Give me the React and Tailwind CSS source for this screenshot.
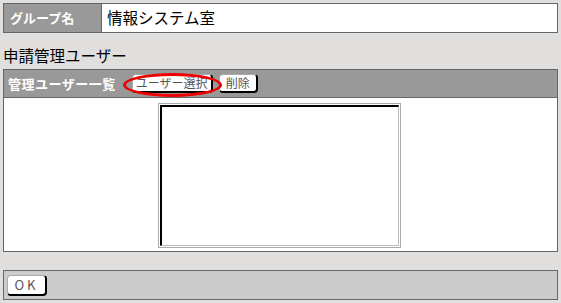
import React from 'react';

const jp = { fontFamily: '"Noto Sans CJK JP", "Liberation Sans", sans-serif' };

const Btn = ({ children, className = '' }) => (
  <button
    className={`flex items-center justify-center bg-white rounded-[4px] border border-t-[#aaa] border-l-[#aaa] border-r-black border-b-black border-r-2 border-b-2 text-[12px] leading-none text-[#555] ${className}`}
  >
    {children}
  </button>
);

export default function App() {
  return (
    <div style={jp} className="w-[561px] h-[303px] bg-[#e1dfde] pt-[3px] pl-[3px] pr-[3px] overflow-hidden">
      {/* グループ名 */}
      <div className="flex h-[30px] border border-[#666] bg-white">
        <div className="w-[98px] bg-[#999] border-r border-[#666] flex items-center pl-[6px] text-[13px] font-bold text-white">
          グループ名
        </div>
        <div className="flex-1 flex items-center pl-[5px] text-[15.5px] text-black">情報システム室</div>
      </div>

      {/* heading */}
      <div className="h-[36px] pt-[12px] text-[15.5px] leading-[20px] text-black">申請管理ユーザー</div>

      {/* panel */}
      <div className="border border-[#666]">
        <div className="relative h-[28px] bg-[#999] border-b border-[#666] flex items-center pl-[4px]">
          <span className="text-[13px] font-bold text-white tracking-[0.5px]">管理ユーザー一覧</span>
          <Btn className="ml-[16px] w-[81px] h-[19px]">ユーザー選択</Btn>
          <Btn className="ml-[6px] w-[39px] h-[19px]">削除</Btn>
          <div className="absolute left-[119px] top-[3px] w-[99px] h-[24px] rounded-[50%] border-[3px] border-[#e00] pointer-events-none" />
        </div>
        <div className="h-[153px] bg-white flex pt-[5px]">
          <div className="w-[243px] h-[145px] border border-[#aaa] p-px ml-[154px]">
            <div className="w-full h-full border-t-2 border-l-2 border-t-black border-l-black border-r border-b border-r-[#bbb] border-b-[#bbb]" />
          </div>
        </div>
      </div>

      {/* footer */}
      <div className="mt-[18px] h-[30px] bg-[#ccc] border border-[#666] flex items-center pl-[3px]">
        <Btn className="w-[40px] h-[21px] text-[13px] tracking-[3px]">OK</Btn>
      </div>
    </div>
  );
}
